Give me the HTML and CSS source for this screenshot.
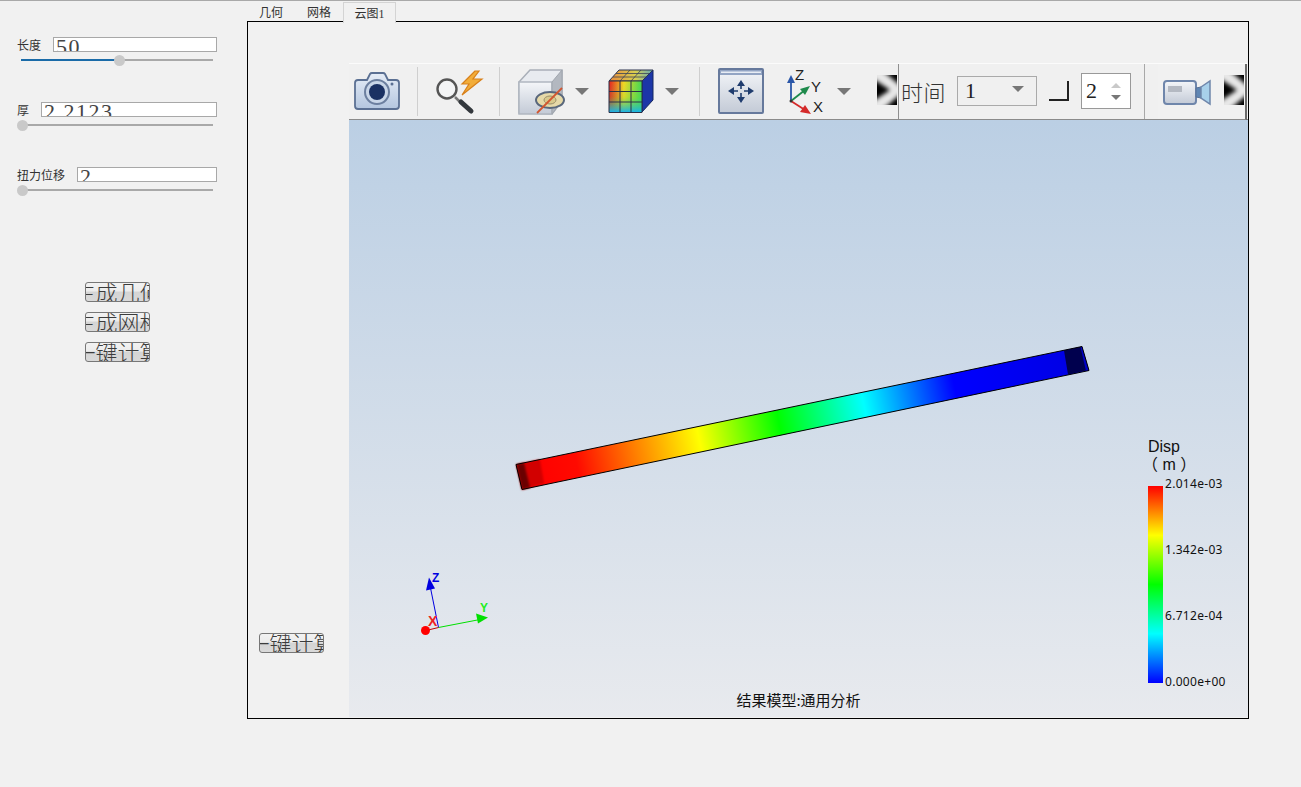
FILE: index.html
```html
<!DOCTYPE html>
<html lang="zh">
<head>
<meta charset="utf-8">
<title>云图</title>
<link rel="stylesheet" href="styles.css">
</head>
<body>
<svg class="defs" width="0" height="0">
  <defs>
    <filter id="capblur" x="-30%" y="-30%" width="160%" height="160%"><feGaussianBlur stdDeviation="0.8"/></filter>
    <symbol id="chev" viewBox="0 0 20 30">
      <rect width="20" height="30" fill="#e8e8e8"/>
      <g class="chev-shapes" fill="#000">
        <polygon points="-5,3 -5,27 13,15"/>
        <polygon points="5,-5 26,-5 26,13"/>
        <polygon points="5,35 26,35 26,17"/>
      </g>
    </symbol>
    <linearGradient id="glass" x1="0" y1="0" x2="0" y2="1">
      <stop offset="0" stop-color="#e6edf7"/><stop offset="1" stop-color="#b4c6df"/>
    </linearGradient>
    <linearGradient id="steel" x1="0" y1="0" x2="0" y2="1">
      <stop offset="0" stop-color="#f4f6f9"/><stop offset="1" stop-color="#c3cad6"/>
    </linearGradient>
    <linearGradient id="cubeH" x1="0" y1="0" x2="1" y2="0">
      <stop offset="0" stop-color="#e8201c"/><stop offset="0.45" stop-color="#f4d820"/><stop offset="1" stop-color="#40d850"/>
    </linearGradient>
    <linearGradient id="cubeV" x1="0" y1="0" x2="0" y2="1">
      <stop offset="0" stop-color="#18c8e8" stop-opacity="0"/><stop offset="0.5" stop-color="#38d860" stop-opacity="0.15"/><stop offset="1" stop-color="#18b0f0" stop-opacity="1"/>
    </linearGradient>
    <linearGradient id="cubeTop" x1="0" y1="0" x2="1" y2="0">
      <stop offset="0" stop-color="#e88a3c"/><stop offset="0.6" stop-color="#d8d050"/><stop offset="1" stop-color="#60a8b8"/>
    </linearGradient>
    <linearGradient id="beam" gradientUnits="userSpaceOnUse" x1="535" y1="476" x2="1066" y2="362">
      <stop offset="0" stop-color="#ff0000"/>
      <stop offset="0.08" stop-color="#ff0a00"/>
      <stop offset="0.31" stop-color="#ffff00"/>
      <stop offset="0.46" stop-color="#00ff00"/>
      <stop offset="0.62" stop-color="#00ffff"/>
      <stop offset="0.79" stop-color="#0000ff"/>
      <stop offset="1" stop-color="#0000e6"/>
    </linearGradient>
  </defs>
</svg>

<div class="app">
  <aside class="sidebar">
    <div class="field">
      <div class="field-top"><span class="field-label">长度</span><div class="field-input">50</div></div>
      <div class="slider"><div class="slider-fill"></div><div class="slider-knob"></div></div>
    </div>
    <div class="field">
      <div class="field-top"><span class="field-label">厚</span><div class="field-input">2.2123</div></div>
      <div class="slider"><div class="slider-knob"></div></div>
    </div>
    <div class="field">
      <div class="field-top"><span class="field-label">扭力位移</span><div class="field-input">2</div></div>
      <div class="slider"><div class="slider-knob"></div></div>
    </div>
    <div class="actions">
      <div class="btn">生成几何</div>
      <div class="btn">生成网格</div>
      <div class="btn">一键计算</div>
    </div>
  </aside>

  <main class="workspace">
    <nav class="tabs">
      <div class="tab tab-a">几何</div>
      <div class="tab tab-b">网格</div>
      <div class="tab tab-active">云图<span class="tab-num">1</span></div>
    </nav>
    <section class="frame">
      <div class="strip"><div class="btn">一键计算</div></div>
      <div class="viewer">
        <div class="toolbar">
          <div class="tb-sec tb-one">
            <svg class="ic ic-cam" viewBox="0 0 46 40">
              <path d="M4 9h9l3-6q.6-1 2-1h11q1.400 0 2 1l3 6h8q3 0 3 3v23q0 3-3 3H4q-3 0-3-3V12q0-3 3-3z" fill="url(#glass)" stroke="#5b7093" stroke-width="1.800"/>
              <circle cx="23" cy="21" r="12" fill="#c9d6e8" stroke="#6c7f9f" stroke-width="2"/>
              <circle cx="23" cy="21" r="8" fill="#1b3163"/>
              <circle cx="38" cy="13" r="1.500" fill="#5b7093"/>
            </svg>
            <div class="sep sep-a"></div>
            <svg class="ic ic-search" viewBox="0 0 48 42">
              <circle cx="11" cy="18" r="9.500" fill="#f3f4f5" stroke="#555" stroke-width="2.400"/>
              <path d="M19 26l6 6" stroke="#777" stroke-width="2.500"/>
              <path d="M25 31l10 9" stroke="#33383d" stroke-width="5" stroke-linecap="round"/>
              <path d="M39 0L26 13h7l-7 11 20-16h-9l6-8z" fill="#f2ad3a" stroke="#d8801a" stroke-width="1.200"/>
            </svg>
            <div class="sep sep-b"></div>
            <svg class="ic ic-box" viewBox="0 0 48 46">
              <path d="M1 44V13L12 1h32v31L34 45z" fill="#e8ebf0" stroke="#a9afb8" stroke-width="1.500"/>
              <path d="M1 13h33v32H1z" fill="url(#steel)" stroke="#b0b6c0" stroke-width="1.500"/>
              <path d="M34 13L44 1v31L34 45z" fill="#b3b8c0" stroke="#a0a6ae"/>
              <ellipse cx="32" cy="31" rx="14" ry="8" fill="#e6d9a8" stroke="#59677c" stroke-width="2"/>
              <ellipse cx="32" cy="31" rx="6" ry="4" fill="#d9c98d" stroke="#9a8f6a"/>
              <path d="M19 44L44 19" stroke="#d2552f" stroke-width="1.800"/>
            </svg>
            <svg class="arrow arrow-box" viewBox="0 0 14 7"><polygon points="0,0 14,0 7,7"/></svg>
            <svg class="ic ic-cube" viewBox="0 0 44 44">
              <path d="M33 12L44 1v30L33 43z" fill="#1c36a8" stroke="#14275e"/>
              <path d="M0 12L10 1h34L33 12z" fill="url(#cubeTop)" stroke="#2c3550"/>
              <path d="M11 12l10-11M22 12L32 1M4 8h34M7 4.500h33" stroke="#3a4258" stroke-width="0.800" fill="none"/>
              <rect x="0" y="12" width="33" height="31.500" fill="url(#cubeH)"/>
              <rect x="0" y="12" width="33" height="31.500" fill="url(#cubeV)"/>
              <path d="M0 12h33v31.500H0zM11 12v31.500M22 12v31.500M0 22.500h33M0 33h33" fill="none" stroke="#2a3148" stroke-width="1"/>
            </svg>
            <svg class="arrow arrow-cube" viewBox="0 0 14 7"><polygon points="0,0 14,0 7,7"/></svg>
            <div class="sep sep-c"></div>
            <svg class="ic ic-fit" viewBox="0 0 46 46">
              <rect x="1" y="1" width="44" height="44" rx="1" fill="url(#steel)" stroke="#66799c" stroke-width="2"/>
              <rect x="2" y="2" width="42" height="5" fill="#93a5c4"/>
              <rect x="3" y="3.500" width="40" height="1.500" fill="#e8edf5"/>
              <g fill="#1f3c6e">
                <path d="M23 16v5M23 30v-5M16 23h4M30 23h-4" fill="none" stroke="#1f3c6e" stroke-width="1.600"/>
                <polygon points="23,12 19,18 27,18"/>
                <polygon points="23,35 19,29 27,29"/>
                <polygon points="10,23 16,19 16,27"/>
                <polygon points="36,23 30,19 30,27"/>
              </g>
            </svg>
            <svg class="ic ic-triad" viewBox="0 0 44 46">
              <path d="M3 32V12" stroke="#2a56a8" stroke-width="1.800"/>
              <polygon points="3,6 -1,14 7,14" fill="#2a56a8"/>
              <path d="M3 32L17 21" stroke="#1f8a4c" stroke-width="1.800"/>
              <polygon points="22,17 12,20 17,26" fill="#1f8a4c"/>
              <path d="M3 32L17 41" stroke="#d42a2a" stroke-width="1.800"/>
              <polygon points="23,45 12,43 17,36" fill="#d42a2a"/>
              <circle cx="3" cy="32" r="1.500" fill="#333"/>
              <text class="ic-axis" x="7" y="11">Z</text>
              <text class="ic-axis" x="23" y="23">Y</text>
              <text class="ic-axis" x="25" y="43">X</text>
            </svg>
            <svg class="arrow arrow-triad" viewBox="0 0 14 7"><polygon points="0,0 14,0 7,7"/></svg>
            <svg class="chev chev-a"><use href="#chev"/></svg>
          </div>
          <div class="tb-sec tb-two">
            <span class="time-label">时间</span>
            <div class="combo"><span>1</span><svg class="combo-arrow" viewBox="0 0 12 6"><polygon points="0,0 12,0 6,6"/></svg></div>
            <div class="corner"></div>
            <div class="spin"><span>2</span>
              <div class="spin-arrows">
                <svg viewBox="0 0 10 5"><polygon points="5,0 10,5 0,5" fill="#c9c9c9"/></svg>
                <svg viewBox="0 0 10 5"><polygon points="0,0 10,0 5,5" fill="#777"/></svg>
              </div>
            </div>
          </div>
          <div class="tb-gap"></div>
          <div class="tb-sec tb-three">
            <svg class="ic ic-video" viewBox="0 0 48 27">
              <rect x="1" y="2" width="32" height="23" rx="3" fill="url(#steel)" stroke="#6f86ab" stroke-width="2"/>
              <rect x="5" y="7" width="14" height="6" fill="#b4b9c2"/>
              <path d="M33 9l5-1v11l-5-1z" fill="#5f86b4" stroke="#5a7398"/>
              <path d="M38 8l9-6v23l-9-6z" fill="#a8d0ea" stroke="#6f86ab" stroke-width="1.500"/>
            </svg>
            <svg class="chev chev-b"><use href="#chev"/></svg>
          </div>
        </div>
        <div class="viewport">
          <svg class="scene" viewBox="349 120 899 596">
            <polygon points="516,464 1082,346 1089,370 522,489" fill="url(#beam)"/>
            <polygon points="516.500,464 540,459 544,483 522,489" fill="#d20404" filter="url(#capblur)"/>
            <polygon points="516.500,464 524,462.500 530,487 522,489" fill="#6a0000" filter="url(#capblur)"/>
            <polygon points="1064,350 1082,346 1088,369.500 1068,374" fill="#00004e"/>
            <polygon points="1082,346 1089,370 1086,370.500 1080.500,346.500" fill="#0000c8"/>
            <polygon points="516,464 1082,346 1089,370 522,489" fill="none" stroke="#000" stroke-width="1"/>

            <path d="M438.500 627L430 585" stroke="#0000e0" stroke-width="1"/>
            <polygon points="429,577 426,590 435,588" fill="#0000e0"/>
            <path d="M438.500 627L480 619" stroke="#00e000" stroke-width="1"/>
            <polygon points="488,617 476,613 478,623" fill="#00e000"/>
            <path d="M438.500 627L426 630" stroke="#c00000" stroke-width="1"/>
            <circle cx="425.500" cy="630" r="4.500" fill="#ff0000"/>
            <text class="triad-label triad-x" x="428" y="625">X</text>
            <text class="triad-label triad-z" x="432" y="581">Z</text>
            <text class="triad-label triad-y" x="480" y="611">Y</text>
          </svg>
          <div class="legend">
            <div class="legend-title">Disp<span class="legend-unit">（ m ）</span></div>
            <div class="legend-body">
              <div class="legend-bar"></div>
              <div class="legend-ticks">
                <span>2.014e-03</span>
                <span>1.342e-03</span>
                <span>6.712e-04</span>
                <span>0.000e+00</span>
              </div>
            </div>
          </div>
          <div class="status">结果模型:通用分析</div>
        </div>
      </div>
    </section>
  </main>
</div>
</body>
</html>
```
FILE: styles.css
```css
* { box-sizing: border-box; }
html, body { margin: 0; height: 100%; }
body {
  background: #f1f1f1;
  border-top: 1px solid #a9a9a9;
  overflow: hidden;
  font-family: "Noto Sans CJK SC", "Liberation Sans", sans-serif;
  color: #222;
}
.defs { display: block; height: 0; }
.app { display: flex; align-items: flex-start; }

/* sidebar */
.sidebar { width: 247px; flex: none; padding-top: 36px; }
.field { height: 65px; }
.field-top { display: flex; align-items: center; gap: 12px; padding: 0 30px 0 17px; height: 15px; }
.field-label { font-size: 12px; line-height: 15px; white-space: nowrap; color: #333; }
.field-input {
  flex: 1;
  height: 15px;
  padding-left: 2px;
  background: #fff;
  border: 1px solid #a8a8a8;
  overflow: hidden;
  font: 22px/17px "Liberation Serif", serif;
  letter-spacing: 1.500px;
  color: #444;
}
.slider { position: relative; width: 192px; height: 2px; margin: 7px 0 0 21px; background: #a9a9a9; }
.slider-fill { width: 98px; height: 2px; background: #1a6ba8; }
.slider-knob {
  position: absolute;
  left: -4px;
  top: -4.500px;
  width: 11px;
  height: 11px;
  border-radius: 50%;
  background: #c9c9c9;
}
.slider-fill + .slider-knob { left: 93px; }
.actions { display: flex; flex-direction: column; align-items: center; gap: 10px; margin-top: 50px; width: 235px; }
.btn {
  display: flex;
  justify-content: center;
  width: 65px;
  height: 20px;
  flex: none;
  overflow: hidden;
  border: 1px solid #777;
  border-radius: 3px;
  background: linear-gradient(#f2f2f2 0, #ececec 45%, #d4d4d4 50%, #d9d9d9 100%);
  font-size: 22px;
  font-weight: 300;
  line-height: 17px;
  white-space: nowrap;
  color: #3c3c3c;
}

/* tabs */
.workspace { width: 1002px; flex: none; }
.tabs { display: flex; height: 20px; position: relative; z-index: 1; }
.tab { font-size: 12px; line-height: 21px; text-align: center; color: #333; }
.tab-a, .tab-b { width: 48px; }
.tab-active {
  width: 53px;
  height: 21px;
  margin-top: 1px;
  line-height: 19px;
  background: #f1f1f1;
  border: 1px solid #d4d4d4;
  border-bottom: 0;
}
.tab-num { font-family: "Liberation Serif", serif; }

/* frame */
.frame { display: flex; height: 698px; border: 1px solid #000; background: #f1f1f1; }
.strip { width: 101px; flex: none; padding: 611px 0 0 11px; }
.viewer { flex: 1; display: flex; flex-direction: column; padding: 41px 0 1px; min-width: 0; }

/* toolbar */
.toolbar {
  display: flex;
  height: 57px;
  flex: none;
  background: #f0f0f0;
  border-top: 1px solid #fbfbfb;
  border-bottom: 1px solid #8b8b8b;
}
.tb-sec { display: flex; align-items: flex-start; flex: none; height: 100%; }
.tb-one { width: 550px; border-right: 1px solid #8f8f8f; }
.tb-two { width: 246px; border-right: 1px solid #a8a8a8; }
.tb-gap { width: 13px; flex: none; }
.tb-three { width: 89px; height: 57px; border-right: 2px solid #6a6a6a; border-bottom: 2px solid #8b8b8b; background: #f1f1f1; }
.ic { display: block; flex: none; overflow: visible; }
.ic-cam { width: 46px; height: 40px; margin: 7px 0 0 5px; }
.sep { width: 1px; height: 49px; margin-top: 3px; background: #cfcfcf; flex: none; }
.sep-a { margin-left: 17px; }
.ic-search { width: 48px; height: 42px; margin: 7px 0 0 18px; }
.sep-b { margin-left: 15px; }
.ic-box { width: 48px; height: 46px; margin: 5px 0 0 18px; }
.arrow { display: block; flex: none; width: 14px; height: 7px; margin-top: 24px; fill: #777; }
.arrow-box { margin-left: 9px; }
.ic-cube { width: 44px; height: 44px; margin: 5px 0 0 20px; }
.arrow-cube { margin-left: 12px; }
.sep-c { margin-left: 20px; }
.ic-fit { width: 46px; height: 46px; margin: 4px 0 0 18px; }
.ic-triad { width: 44px; height: 46px; margin: 5px 0 0 24px; }
.ic-axis { font: 15px "Liberation Sans", sans-serif; fill: #222; }
.arrow-triad { margin-left: 5px; }
.chev { display: block; flex: none; width: 20px; height: 30px; margin-top: 11px; }
.chev-a { margin-left: 26px; }
.chev-shapes { filter: blur(2px); }

.time-label { font-size: 22px; font-weight: 300; line-height: 30px; margin: 12px 0 0 2px; color: #333; white-space: nowrap; letter-spacing: 0.500px; }
.combo {
  display: flex;
  align-items: center;
  justify-content: space-between;
  width: 80px;
  height: 30px;
  margin: 12px 0 0 11px;
  padding: 0 12px 0 7px;
  border: 1px solid #aaa;
  font: 22px "Liberation Serif", serif;
  color: #222;
}
.combo-arrow { width: 12px; height: 6px; margin-top: -5px; fill: #777; }
.corner { width: 20px; height: 20px; margin: 17px 0 0 12px; border-right: 2px solid #222; border-bottom: 2px solid #222; }
.spin {
  display: flex;
  align-items: center;
  justify-content: space-between;
  width: 50px;
  height: 36px;
  margin: 9px 0 0 12px;
  padding: 0 9px 0 4px;
  background: #fff;
  border: 1px solid #999;
  font: 22px "Liberation Serif", serif;
  color: #222;
}
.spin-arrows { display: flex; flex-direction: column; gap: 7px; }
.spin-arrows svg { display: block; width: 10px; height: 5px; }
.ic-video { width: 48px; height: 27px; margin: 15px 0 0 5px; }
.chev-b { margin-left: 13px; }

/* viewport */
.viewport {
  position: relative;
  flex: 1;
  background: linear-gradient(#bbcfe4, #e8eaee);
  overflow: hidden;
}
.scene { display: block; width: 100%; height: 100%; }
.triad-label { font: 700 12px "Liberation Sans", sans-serif; }
.triad-x { fill: #ee2222; font-size: 14px; }
.triad-y { fill: #22ee22; }
.triad-z { fill: #0000e0; }
.legend { position: absolute; left: 799px; top: 318px; }
.legend-title { font-size: 16px; line-height: 18px; color: #111; white-space: nowrap; font-family: "Liberation Sans", "Noto Sans CJK SC", sans-serif; }
.legend-unit { display: block; margin-left: -6px; }
.legend-body { display: flex; margin-top: 12px; }
.legend-bar {
  width: 15px;
  height: 197px;
  background: linear-gradient(#ff0000 0, #ffff00 25%, #00ff00 50%, #00ffff 75%, #0000ff 100%);
}
.legend-ticks {
  display: flex;
  flex-direction: column;
  justify-content: space-between;
  height: 212px;
  margin: -9px 0 0 2px;
  font: 12px/14px "Noto Sans", "Liberation Sans", sans-serif;
  letter-spacing: 0.300px;
  color: #111;
  white-space: nowrap;
}
.status {
  position: absolute;
  left: 0;
  right: 0;
  bottom: 7px;
  text-align: center;
  font-size: 15px;
  line-height: 20px;
  color: #111;
}
```
